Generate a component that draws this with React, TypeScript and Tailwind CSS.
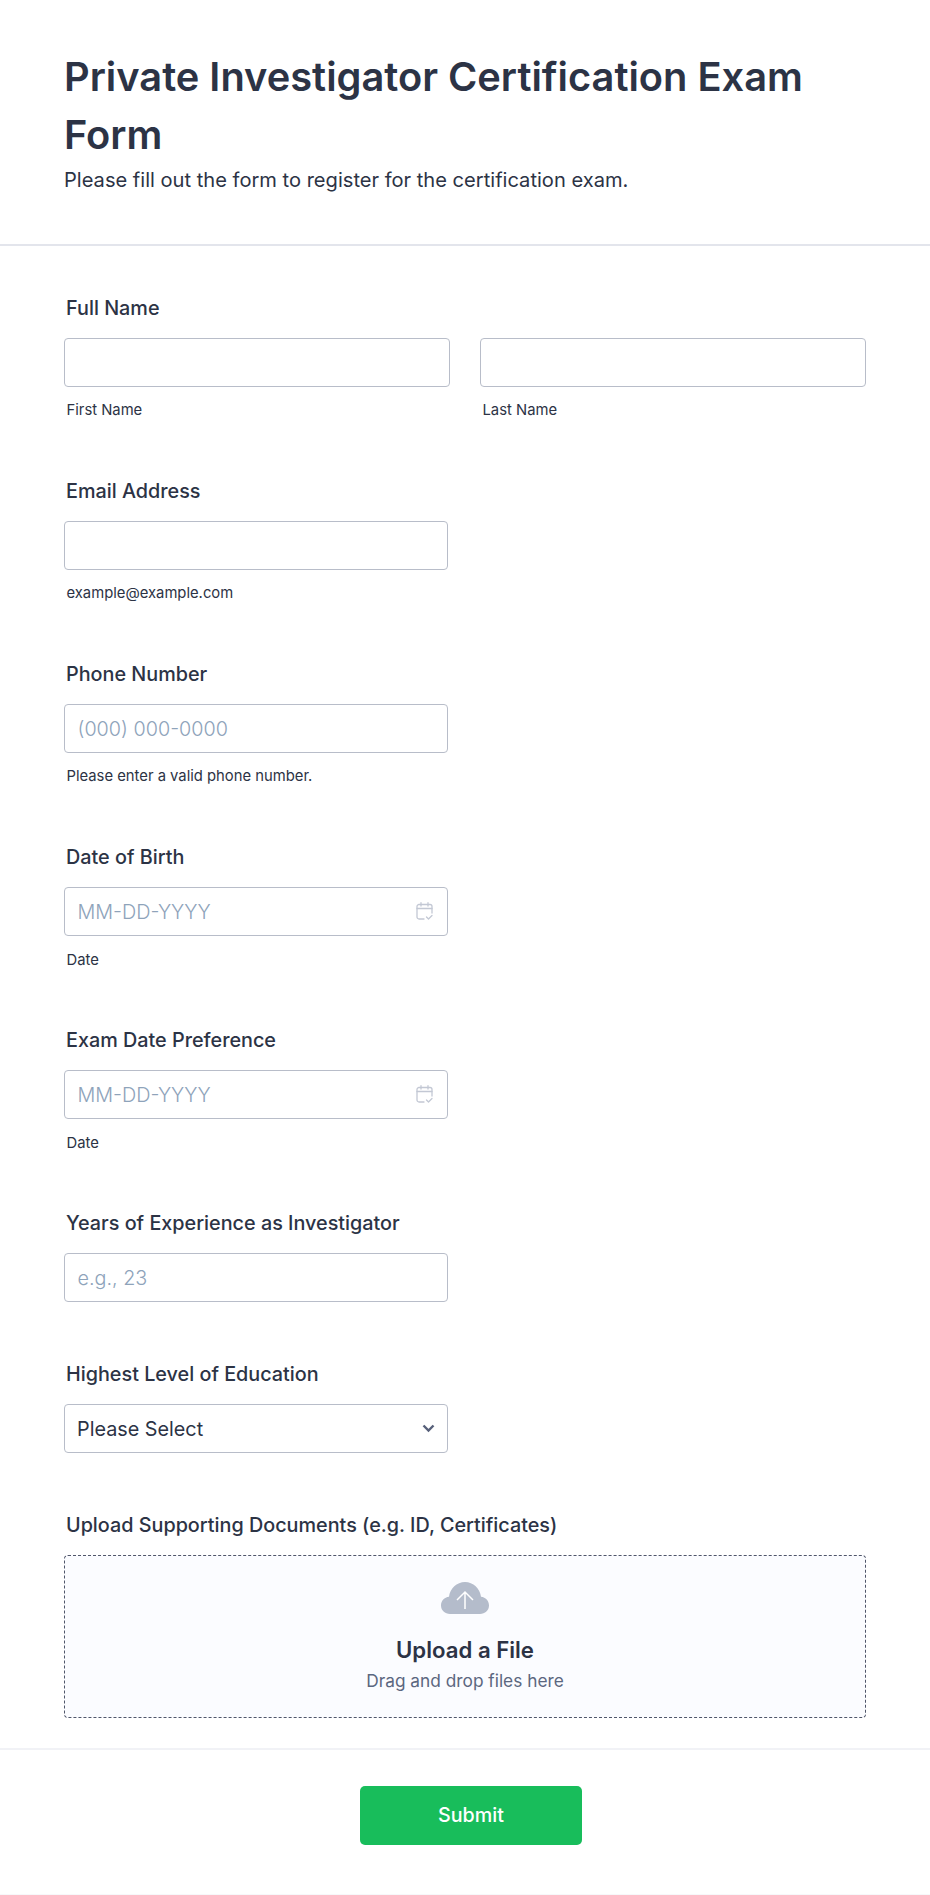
import { ReactNode } from 'react';

const inputClass =
  'h-[49px] w-full rounded-[4px] border border-[#b8bdc9] bg-white px-[12.500px] text-[19.800px] font-light text-[#2c3345] outline-none placeholder:text-[#8ea3ba]';

function Field({ label, children, className }: { label: string; children: ReactNode; className: string }) {
  return (
    <div className={className}>
      <label className="mb-[17px] block pl-[2px] text-[19.800px] leading-[26px] font-medium text-[#2c3345]">{label}</label>
      {children}
    </div>
  );
}

function Sub({ children }: { children: ReactNode }) {
  return <p className="mt-[14px] pl-[2.500px] text-[14.800px] leading-[18px] text-[#2c3345]">{children}</p>;
}

function CalendarIcon() {
  return (
    <svg
      className="absolute top-[15px] right-[15px]"
      width="17"
      height="18"
      viewBox="0 0 17 18"
      fill="none"
      stroke="#c3c8d4"
      strokeWidth="1.300"
      strokeLinecap="round"
      strokeLinejoin="round"
    >
      <path d="M8 17H3a2 2 0 0 1-2-2V4.500a2 2 0 0 1 2-2h11a2 2 0 0 1 2 2V11" />
      <path d="M1 6.500h15" />
      <path d="M5 0.700V4M12 0.700V4" />
      <path d="M10.500 15l2 2 3.500-3.500" />
    </svg>
  );
}

function DateField({ label, className }: { label: string; className: string }) {
  return (
    <Field label={label} className={className}>
      <div className="relative w-[384px]">
        <input className={inputClass} placeholder="MM-DD-YYYY" readOnly />
        <CalendarIcon />
      </div>
      <div className="-mb-[1px] pt-[1px]">
        <Sub>Date</Sub>
      </div>
    </Field>
  );
}

export default function App() {
  return (
    <main className="min-h-[1895px] border-b border-[#f7f8fa] bg-white font-['Inter',sans-serif] text-[#2c3345]">
      <header className="h-[246px] border-b-2 border-[#e3e5ec] px-16 pt-[48px]">
        <h1 className="w-[800px] text-[39.800px] leading-[58px] font-semibold text-[#2c3345]">
          Private Investigator Certification Exam Form
        </h1>
        <p className="mt-[2px] text-[20.100px] leading-[28px] font-normal text-[#2c3345]">
          Please fill out the form to register for the certification exam.
        </p>
      </header>

      <section className="px-16 pt-[49px]">
        <Field label="Full Name" className="">
          <div className="flex w-[802px] gap-[30px]">
            <div className="w-[386px]">
              <input className={inputClass} readOnly />
              <Sub>First Name</Sub>
            </div>
            <div className="w-[386px]">
              <input className={inputClass} readOnly />
              <Sub>Last Name</Sub>
            </div>
          </div>
        </Field>

        <Field label="Email Address" className="mt-[59px]">
          <input className={`${inputClass} max-w-[384px]`} readOnly />
          <Sub>example@example.com</Sub>
        </Field>

        <Field label="Phone Number" className="mt-[59px]">
          <input className={`${inputClass} max-w-[384px]`} placeholder="(000) 000-0000" readOnly />
          <Sub>Please enter a valid phone number.</Sub>
        </Field>

        <DateField label="Date of Birth" className="mt-[59px]" />
        <DateField label="Exam Date Preference" className="mt-[59px]" />

        <Field label="Years of Experience as Investigator" className="mt-[59px]">
          <input className={`${inputClass} max-w-[384px]`} placeholder="e.g., 23" readOnly />
        </Field>

        <Field label="Highest Level of Education" className="mt-[59px]">
          <div className="relative flex h-[49px] w-[384px] items-center rounded-[4px] border border-[#b8bdc9] bg-white px-[12px] pt-[2px] text-[19.800px] text-[#2c3345]">
            Please Select
            <svg
              className="absolute top-[19px] right-[12px]"
              width="13"
              height="9"
              viewBox="0 0 13 9"
              fill="none"
              stroke="#57607a"
              strokeWidth="2.400"
            >
              <path d="M1.500 1.500l5 5 5-5" />
            </svg>
          </div>
        </Field>

        <Field label="Upload Supporting Documents (e.g. ID, Certificates)" className="mt-[59px]">
          <div className="flex h-[163px] w-[802px] flex-col items-center rounded-[4px] border border-dashed border-[#50566a] bg-[#fbfcff] pt-[26px]">
            <svg width="48" height="32" viewBox="0 0 48 32">
              <path
                d="M9 32C4 32 0 28.400 0 23.500C0 19 3.400 15.300 8 14.800C9 6.500 15.800 0 24 0S39 6.500 40 14.800C44.600 15.300 48 19 48 23.500C48 28.400 44 32 39 32H9z"
                fill="#b4bccb"
              />
              <path d="M24 27V10M16 18l8-8 8 8" fill="none" stroke="#ffffff" strokeWidth="1.500" />
            </svg>
            <p className="mt-[20px] text-[22.200px] leading-[32px] font-semibold text-[#2c3345]">Upload a File</p>
            <p className="mt-[3px] text-[17.300px] leading-[24px] text-[#5b6780]">Drag and drop files here</p>
          </div>
        </Field>
      </section>

      <footer className="mt-[30px] flex justify-center border-t-2 border-[#f1f2f6] pt-[36px]">
        <button className="ml-[12px] h-[59px] w-[222px] rounded-[5px] bg-[#18bd5b] text-[19.700px] font-medium text-white">
          Submit
        </button>
      </footer>
    </main>
  );
}
